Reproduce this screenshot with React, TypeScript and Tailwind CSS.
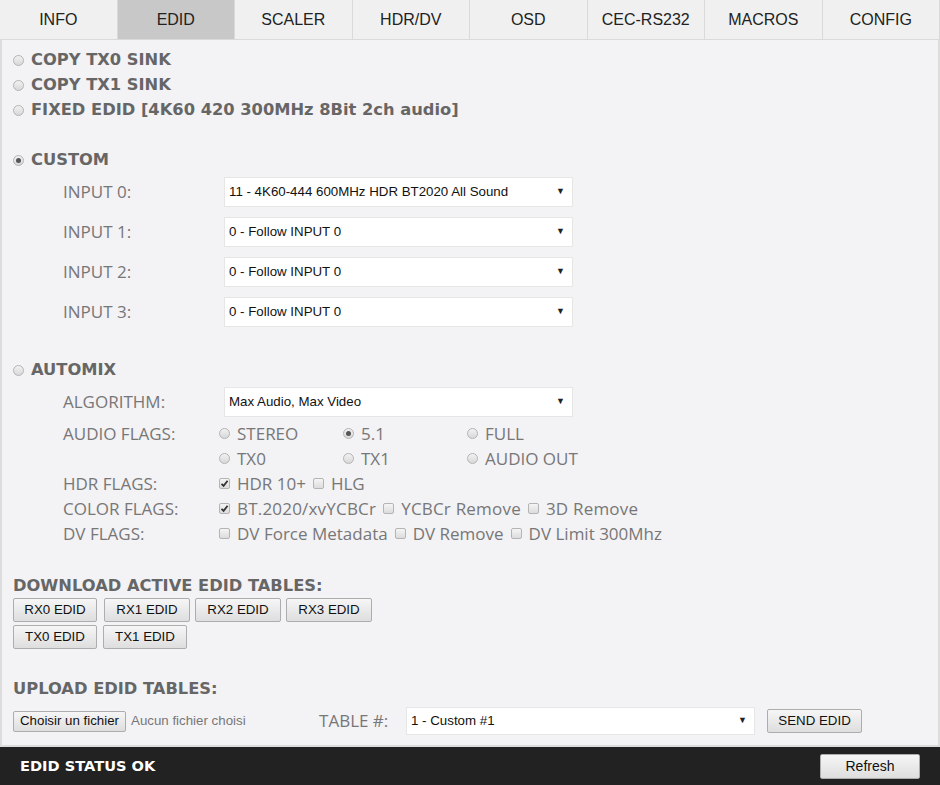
import { useState } from 'react';

const tabs = ['INFO', 'EDID', 'SCALER', 'HDR/DV', 'OSD', 'CEC-RS232', 'MACROS', 'CONFIG'];

function Radio({ checked }: { checked?: boolean }) {
  return (
    <span className="inline-flex items-center justify-center w-[11px] h-[11px] rounded-full border border-[#b4b4b4] bg-gradient-to-b from-[#f2f2f2] to-[#d8d8d8] shrink-0">
      {checked && <span className="w-[5px] h-[5px] rounded-full bg-[#555]" />}
    </span>
  );
}

function Check({ checked }: { checked?: boolean }) {
  return (
    <span className="inline-flex items-center justify-center w-[11px] h-[11px] rounded-[2px] border border-[#b4b4b4] bg-gradient-to-b from-[#f5f5f5] to-[#dcdcdc] shrink-0">
      {checked && (
        <svg width="9" height="9" viewBox="0 0 9 9">
          <path d="M1.5 4.8 L3.6 6.9 L7.6 1.8" stroke="#333" strokeWidth="1.8" fill="none" />
        </svg>
      )}
    </span>
  );
}

function Select({ value, h = 'h-[30px]' }: { value: string; h?: string }) {
  return (
    <div className={`w-[349px] ${h} bg-white border border-[#e6e6e6] flex items-center justify-between pl-[4px] pr-[7px] font-['Liberation_Sans',Arial,sans-serif] text-[13.3px] text-[#111]`}>
      <span>{value}</span>
      <span className="text-[9px] text-[#222]">▼</span>
    </div>
  );
}

function Btn({ children, cls = '' }: { children: React.ReactNode; cls?: string }) {
  return (
    <button className={`h-[24px] border border-[#adadad] rounded-[2px] bg-gradient-to-b from-[#f6f6f6] to-[#dedede] font-['Liberation_Sans',Arial,sans-serif] text-[13.3px] text-[#111] leading-none ${cls}`}>
      {children}
    </button>
  );
}

const heading = "font-['DejaVu_Sans',Verdana,sans-serif] font-bold text-[16.3px] text-[#666]";
const label = "font-['Open_Sans',sans-serif] text-[17px] text-[#777]";

export default function App() {
  const [active] = useState('EDID');

  return (
    <div className="w-[940px] h-[785px] flex flex-col bg-[#f3f2f5] overflow-hidden">
      <div className="grid grid-cols-8 h-[40px] shrink-0">
        {tabs.map((t) => (
          <div
            key={t}
            className={`flex items-center justify-center border-r border-b border-[#dadada] font-['Liberation_Sans',Arial,sans-serif] text-[16px] text-[#222] ${
              t === active ? 'bg-[#c8c8c8]' : 'bg-[#f0f0f0]'
            }`}
          >
            {t}
          </div>
        ))}
      </div>

      <div className="flex-1 border-x-2 border-b-2 border-[#dcdcdc] pl-[11px] pr-3 pt-[8px]">
        <div className={heading}>
          <div className="flex items-center gap-[7px] h-[25px]"><Radio /> COPY TX0 SINK</div>
          <div className="flex items-center gap-[7px] h-[25px]"><Radio /> COPY TX1 SINK</div>
          <div className="flex items-center gap-[7px] h-[25px]"><Radio /> FIXED EDID [4K60 420 300MHz 8Bit 2ch audio]</div>
          <div className="h-[25px]" />
          <div className="flex items-center gap-[7px] h-[25px]"><Radio checked /> CUSTOM</div>
        </div>

        <div className="pl-[50px] pt-[4px] flex flex-col gap-[10px]">
          {['11 - 4K60-444 600MHz HDR BT2020 All Sound', '0 - Follow INPUT 0', '0 - Follow INPUT 0', '0 - Follow INPUT 0'].map((v, i) => (
            <div key={i} className="flex items-center">
              <span className={`${label} w-[161px]`}>INPUT {i}:</span>
              <Select value={v} />
            </div>
          ))}
        </div>

        <div className={`${heading} flex items-center gap-[7px] h-[25px] mt-[31px]`}><Radio /> AUTOMIX</div>

        <div className={`pl-[50px] pt-[4px] ${label}`}>
          <div className="flex items-center">
            <span className="w-[161px]">ALGORITHM:</span>
            <Select value="Max Audio, Max Video" />
          </div>
          <div className="flex mt-[4px]">
            <span className="w-[156px] h-[25px] flex items-center">AUDIO FLAGS:</span>
            <div className="grid grid-cols-[124px_124px_124px]">
              {[['STEREO', false], ['5.1', true], ['FULL', false], ['TX0', false], ['TX1', false], ['AUDIO OUT', false]].map(([t, c]) => (
                <div key={t as string} className="flex items-center gap-[7px] h-[25px]">
                  <Radio checked={c as boolean} /> {t as string}
                </div>
              ))}
            </div>
          </div>
          <div className="flex items-center h-[25px]">
            <span className="w-[156px]">HDR FLAGS:</span>
            <span className="flex items-center gap-[7px]"><Check checked /> HDR 10+ <Check /> HLG</span>
          </div>
          <div className="flex items-center h-[25px]">
            <span className="w-[156px]">COLOR FLAGS:</span>
            <span className="flex items-center gap-[7px] tracking-[0.2px]"><Check checked /> BT.2020/xvYCBCr <Check /> YCBCr Remove <Check /> 3D Remove</span>
          </div>
          <div className="flex items-center h-[25px]">
            <span className="w-[156px]">DV FLAGS:</span>
            <span className="flex items-center gap-[7px]"><Check /> DV Force Metadata <Check /> DV Remove <Check /> DV Limit 300Mhz</span>
          </div>
        </div>

        <div className={`${heading} mt-[28px] h-[25px] flex items-center`}>DOWNLOAD ACTIVE EDID TABLES:</div>
        <div className="flex flex-col gap-[3px] -mt-[1px]">
          <div className="flex gap-[5px]">
            <Btn cls="w-[84px]">RX0 EDID</Btn>
            <Btn cls="w-[86px] ml-[2px]">RX1 EDID</Btn>
            <Btn cls="w-[86px]">RX2 EDID</Btn>
            <Btn cls="w-[86px]">RX3 EDID</Btn>
          </div>
          <div className="flex gap-[6px]">
            <Btn cls="w-[84px]">TX0 EDID</Btn>
            <Btn cls="w-[84px]">TX1 EDID</Btn>
          </div>
        </div>

        <div className={`${heading} mt-[28px] h-[25px] flex items-center`}>UPLOAD EDID TABLES:</div>
        <div className="flex items-center mt-[5px]">
          <button className="h-[21px] px-[6px] border border-[#adadad] rounded-[2px] bg-gradient-to-b from-[#f6f6f6] to-[#dedede] font-['Liberation_Sans',Arial,sans-serif] text-[13.3px] text-[#111] leading-none">
            Choisir un fichier
          </button>
          <span className="ml-[5px] w-[188px] font-['Liberation_Sans',Arial,sans-serif] text-[13.3px] text-[#777]">Aucun fichier choisi</span>
          <span className={`${label} w-[87px]`}>TABLE #:</span>
          <Select value="1 - Custom #1" h="h-[28px]" />
          <Btn cls="ml-[12px] w-[95px]">SEND EDID</Btn>
        </div>
      </div>

      <div className="h-[38px] shrink-0 bg-[#222] flex items-center justify-between pl-[20px] pr-[20px]">
        <span className="font-['DejaVu_Sans',Verdana,sans-serif] font-bold text-[14.6px] text-white">EDID STATUS OK</span>
        <button className="w-[100px] h-[25px] border border-[#adadad] rounded-[2px] bg-gradient-to-b from-[#f6f6f6] to-[#dedede] font-['Liberation_Sans',Arial,sans-serif] text-[14px] text-[#111]">
          Refresh
        </button>
      </div>
    </div>
  );
}
